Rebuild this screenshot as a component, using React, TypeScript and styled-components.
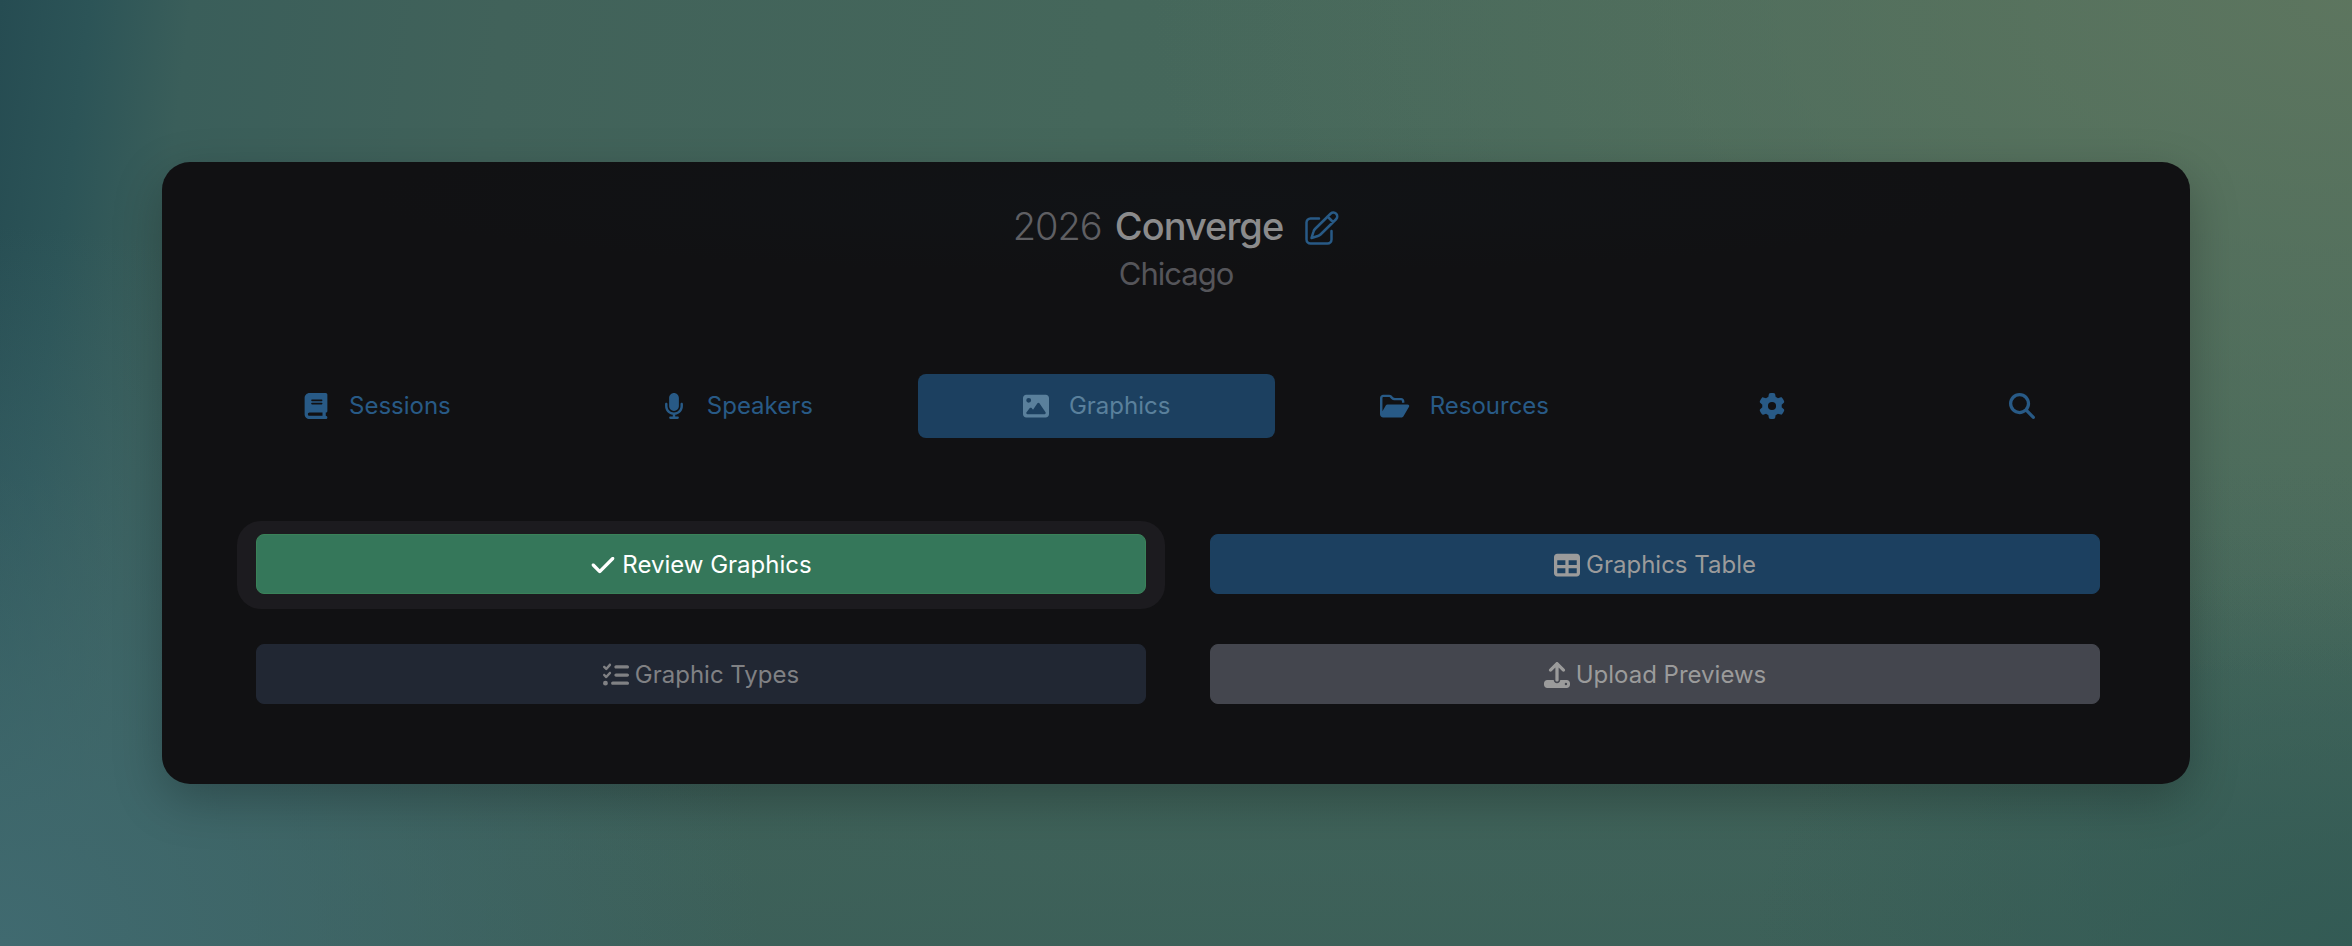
import React from 'react';
import styled, { createGlobalStyle } from 'styled-components';
import { FaBook, FaMicrophone, FaImage, FaGear, FaMagnifyingGlass, FaCheck, FaTable, FaListCheck, FaUpload } from 'react-icons/fa6';

const fontStack = 'Inter, "Liberation Sans", sans-serif';

const Global = createGlobalStyle`
  *, *::before, *::after { box-sizing: border-box; }
  body {
    margin: 0;
    min-height: 100vh;
    font-family: ${fontStack};
    color: #8b8b8c;
    background:
      radial-gradient(ellipse 1200px 680px at 100% 0%, rgba(94, 118, 95, 0.95), rgba(94, 118, 95, 0) 100%),
      radial-gradient(ellipse 760px 720px at 0% 100%, rgba(64, 106, 112, 1), rgba(64, 106, 112, 0) 100%),
      radial-gradient(ellipse 600px 380px at 100% 100%, rgba(50, 90, 84, 0.9), rgba(50, 90, 84, 0) 100%),
      linear-gradient(0deg, rgba(58, 94, 88, 0.8), rgba(58, 94, 88, 0) 50%),
      linear-gradient(97deg, #264c52 0px, #2c5457 90px, #3a5e5a 190px, #41625a 500px, #45675b 1100px, #486a5c 100%);
  }
`;

const Page = styled.main`
  min-height: 100vh;
  padding: 162px;
`;

const Card = styled.section`
  padding: 40px 36px 80px;
  border-radius: 28px;
  background:
    radial-gradient(ellipse 40% 12% at 50% 6%, #111316, #111113) no-repeat,
    #111113;
  box-shadow: 0 16px 48px rgba(0, 0, 0, 0.25);
`;

const Heading = styled.header`
  display: flex;
  flex-direction: column;
  align-items: center;
`;

const TitleRow = styled.div`
  display: flex;
  align-items: center;
  gap: 22px;
`;

const Title = styled.h1`
  margin: 0;
  font-size: 38px;
  line-height: 48px;
  font-weight: 500;
  letter-spacing: -1px;
`;

const Year = styled.span`
  margin-right: 4px;
  font-weight: 300;
  color: #5f5f63;
`;

const EditLink = styled.a`
  display: flex;
  padding-top: 4px;
  color: #285a86;
`;

const Place = styled.p`
  margin: 0;
  font-size: 31px;
  line-height: 48px;
  font-weight: 400;
  letter-spacing: -1px;
  color: #55555a;
`;

const Nav = styled.nav`
  display: flex;
  margin-top: 76px;
`;

const Tab = styled.a<{ $active?: boolean; $wide?: boolean }>`
  display: flex;
  flex: 1 1 auto;
  align-items: center;
  justify-content: center;
  gap: 20px;
  height: 64px;
  padding: 0 ${p => (p.$wide ? 30 : 16)}px;
  border-radius: 8px;
  font-size: 24px;
  line-height: 32px;
  text-decoration: none;
  color: ${p => (p.$active ? '#5a809c' : '#285a86')};
  background: ${p => (p.$active ? '#1c4060' : 'transparent')};

  svg { height: 26px; width: auto; }
`;

const Actions = styled.div`
  display: grid;
  grid-template-columns: 1fr 1fr;
  gap: 50px 64px;
  margin-top: 96px;
  padding: 0 54px 0 58px;
`;

const Spotlight = styled.div`
  display: grid;
  margin: -13px -19px -15px;
  padding: 13px 19px 15px;
  border-radius: 24px;
  background: #1c1b1f;
`;

const Action = styled.button<{ $bg: string; $fg: string; $edge?: string }>`
  display: flex;
  align-items: center;
  justify-content: center;
  gap: 6px;
  height: 60px;
  padding: 2px 16px 0;
  border: 1px solid ${p => p.$edge ?? p.$bg};
  border-radius: 8px;
  background: ${p => p.$bg};
  color: ${p => p.$fg};
  font: 400 24px/32px ${fontStack};

  svg { height: 26px; width: auto; }
`;

const EditIcon = () => (
  <svg width="34" height="34" viewBox="0 0 34 34" fill="none" stroke="currentColor" strokeWidth="2.5" strokeLinecap="round" strokeLinejoin="round" aria-hidden="true">
    <path d="M14 7.5H5.500a4 4 0 0 0-4 4V28.500a4 4 0 0 0 4 4h17a4 4 0 0 0 4-4V20" />
    <path d="M25.800 2.500a3.900 3.900 0 0 1 5.500 5.500L15.500 23.500a6 6 0 0 1-2.600 1.500L6.500 27l2-6.400a6 6 0 0 1 1.500-2.600zM22.500 5.500l5.500 5.500" />
  </svg>
);

const FolderIcon = () => (
  <svg viewBox="0 0 576 512" fill="currentColor" aria-hidden="true">
    <path d="M384 480h48c11.4 0 21.9-6 27.6-15.900l112-192c5.800-9.900 5.800-22.100 .1-32.100S555.500 224 544 224H144c-11.400 0-21.900 6-27.600 15.900L48 357.100V96c0-8.800 7.200-16 16-16H181.500c4.200 0 8.300 1.700 11.300 4.700l26.500 26.500c21 21 49.500 32.800 79.200 32.800H416c8.800 0 16 7.200 16 16v32h48V160c0-35.300-28.700-64-64-64H298.500c-17 0-33.300-6.700-45.300-18.700L226.700 50.700c-12-12-28.300-18.700-45.300-18.700H64C28.700 32 0 60.700 0 96V416c0 35.300 28.700 64 64 64H87.700 384z" />
  </svg>
);

export default function App() {
  return (
    <>
      <Global />
      <Page>
        <Card>
          <Heading>
            <TitleRow>
              <Title><Year>2026</Year> Converge</Title>
              <EditLink href="#edit" aria-label="Edit event"><EditIcon /></EditLink>
            </TitleRow>
            <Place>Chicago</Place>
          </Heading>
          <Nav>
            <Tab href="#sessions"><FaBook />Sessions</Tab>
            <Tab href="#speakers"><FaMicrophone />Speakers</Tab>
            <Tab href="#graphics" $active><FaImage />Graphics</Tab>
            <Tab href="#resources"><FolderIcon />Resources</Tab>
            <Tab href="#settings" aria-label="Settings"><FaGear /></Tab>
            <Tab href="#search" aria-label="Search" $wide><FaMagnifyingGlass /></Tab>
          </Nav>
          <Actions>
            <Spotlight>
              <Action $bg="#35775a" $fg="#fff" $edge="#3a8259"><FaCheck />Review Graphics</Action>
            </Spotlight>
            <Action $bg="#1c4060" $fg="#9b9b9b"><FaTable />Graphics Table</Action>
            <Action $bg="#212733" $fg="#808184"><FaListCheck />Graphic Types</Action>
            <Action $bg="#44464e" $fg="#9b9b9b"><FaUpload />Upload Previews</Action>
          </Actions>
        </Card>
      </Page>
    </>
  );
}
